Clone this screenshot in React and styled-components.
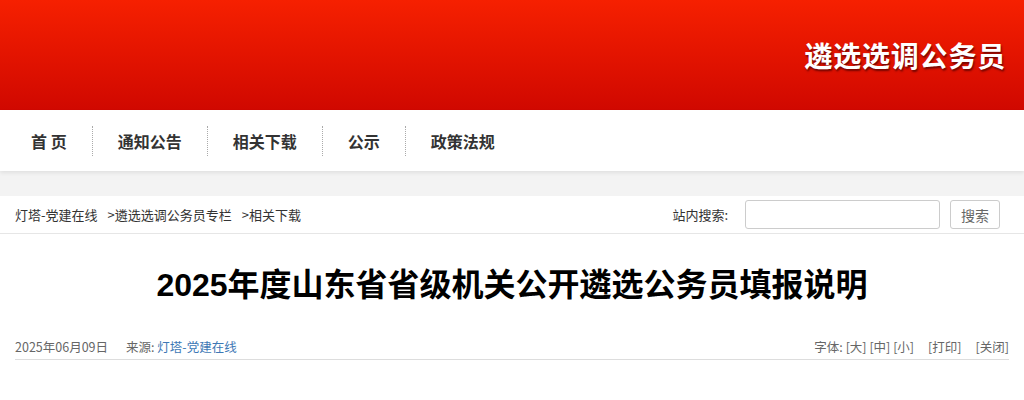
import styled, { createGlobalStyle } from 'styled-components';

const Global = createGlobalStyle`
    body {
        margin: 0;
        background: #fff;
        font-family: "Microsoft YaHei", "Noto Sans CJK SC", sans-serif;
        color: #333;
    }
`;

const navItems = ["首 页", "通知公告", "相关下载", "公示", "政策法规"];

export default function App(){
    return(
        <>
        <Global />
        <Header>
            <SiteName>遴选选调公务员</SiteName>
        </Header>
        <Nav>
            {navItems.map((item, i) => (
                <NavItem key={item} last={i === navItems.length - 1}>{item}</NavItem>
            ))}
        </Nav>
        <Band />
        <Crumbs>
            <Path>
                <span>灯塔-党建在线</span>
                <span>&gt;遴选选调公务员专栏</span>
                <span>&gt;相关下载</span>
            </Path>
            <Search>
                <Label>站内搜索:</Label>
                <SearchInput type="text" />
                <SearchButton>搜索</SearchButton>
            </Search>
        </Crumbs>
        <Article>
            <Title>2025年度山东省省级机关公开遴选公务员填报说明</Title>
            <Meta>
                <MetaLeft>
                    <span>2025年06月09日</span>
                    <span>来源: <Source>灯塔-党建在线</Source></span>
                </MetaLeft>
                <Tools>
                    <span>字体: [大] [中] [小]</span>
                    <span>[打印]</span>
                    <span>[关闭]</span>
                </Tools>
            </Meta>
        </Article>
        </>
    )
}

const Header = styled.div`
    height: 110px;
    background: linear-gradient(to bottom, #f62000, #d00800);
    display: flex;
    justify-content: flex-end;
    align-items: center;
    padding-right: 18px;
`;

const SiteName = styled.h1`
    margin: 0;
    font-family: "Noto Sans CJK SC", sans-serif;
    font-size: 28px;
    font-weight: 700;
    letter-spacing: 0.8px;
    color: #fff;
    text-shadow: 1px 2px 2px rgba(70, 0, 0, 0.7);
`;

const Nav = styled.div`
    height: 61px;
    background: #fff;
    display: flex;
    align-items: center;
    padding-left: 6px;
    box-shadow: 0 2px 4px rgba(0, 0, 0, 0.08);
    position: relative;
    z-index: 1;
`;

const NavItem = styled.div`
    font-family: "Noto Sans CJK SC", sans-serif;
    font-size: 16px;
    font-weight: 700;
    color: #333;
    padding: 0 25px;
    line-height: 30px;
    border-right: ${p => p.last ? 'none' : '1px dotted #aaa'};
`;

const Band = styled.div`
    height: 25px;
    background: #f3f3f3;
`;

const Crumbs = styled.div`
    height: 37px;
    border-bottom: 1px solid #e6e6e6;
    display: flex;
    justify-content: space-between;
    align-items: center;
    padding: 0 24px 0 15px;
    font-size: 13px;
    color: #333;
`;

const Path = styled.div`
    display: flex;
    gap: 8px;
    span + span { margin-left: 2px; }
`;

const Search = styled.div`
    display: flex;
    align-items: center;
`;

const Label = styled.span`
    margin-right: 17px;
`;

const SearchInput = styled.input`
    width: 195px;
    height: 29px;
    box-sizing: border-box;
    border: 1px solid #ccc;
    border-radius: 3px;
    margin: 0 10px 0 0;
    outline: none;
`;

const SearchButton = styled.button`
    width: 50px;
    height: 29px;
    box-sizing: border-box;
    border: 1px solid #ccc;
    border-radius: 3px;
    background: #fff;
    font-family: "Microsoft YaHei", "Noto Sans CJK SC", sans-serif;
    font-size: 14px;
    color: #666;
    padding: 0;
`;

const Article = styled.div`
    margin: 0 15px;
`;

const Title = styled.h2`
    margin: 0;
    padding-top: 29px;
    height: 70px;
    text-align: center;
    font-family: "Liberation Sans", "Noto Sans CJK SC", sans-serif;
    font-size: 32px;
    font-weight: 700;
    line-height: 44px;
    color: #000;
`;

const Meta = styled.div`
    height: 26px;
    border-bottom: 1px solid #ddd;
    display: flex;
    justify-content: space-between;
    align-items: center;
    font-size: 12.5px;
    color: #666;
`;

const MetaLeft = styled.div`
    display: flex;
    gap: 18px;
`;

const Source = styled.span`
    color: #3d78b5;
`;

const Tools = styled.div`
    display: flex;
    gap: 14px;
`;
